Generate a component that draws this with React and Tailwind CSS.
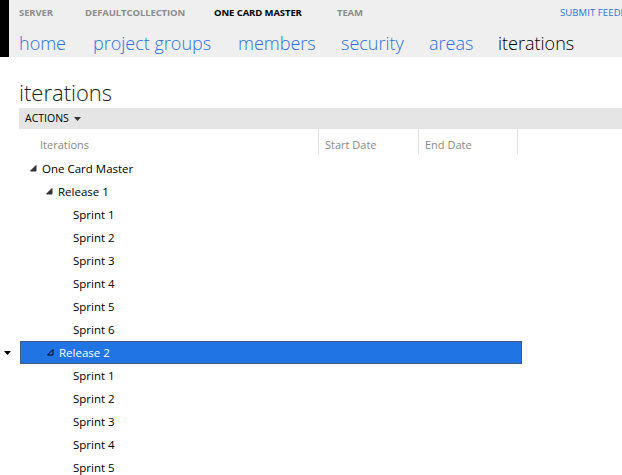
import React from 'react';

const crumbs = [
  { label: 'SERVER', w: 'w-[66px]', active: false },
  { label: 'DEFAULTCOLLECTION', w: 'w-[129px]', active: false },
  { label: 'ONE CARD MASTER', w: 'w-[123px]', active: true },
  { label: 'TEAM', w: 'w-[223px]', active: false },
];

const tabs = [
  { label: 'home', w: 'w-[74px]' },
  { label: 'project groups', w: 'w-[145px]' },
  { label: 'members', w: 'w-[103px]' },
  { label: 'security', w: 'w-[88px]' },
  { label: 'areas', w: 'w-[69px]' },
  { label: 'iterations', w: 'w-[90px]', active: true },
];

const rows = [
  { label: 'One Card Master', level: 0, node: true },
  { label: 'Release 1', level: 1, node: true },
  { label: 'Sprint 1', level: 2 },
  { label: 'Sprint 2', level: 2 },
  { label: 'Sprint 3', level: 2 },
  { label: 'Sprint 4', level: 2 },
  { label: 'Sprint 5', level: 2 },
  { label: 'Sprint 6', level: 2 },
  { label: 'Release 2', level: 1, node: true, selected: true },
  { label: 'Sprint 1', level: 2 },
  { label: 'Sprint 2', level: 2 },
  { label: 'Sprint 3', level: 2 },
  { label: 'Sprint 4', level: 2 },
  { label: 'Sprint 5', level: 2 },
];

const indent = ['pl-[10px]', 'pl-[26px]', 'pl-[53px]'];

const Expander = ({ hollow }) => (
  <svg width="7" height="7" viewBox="0 0 7 7" className="mr-[5px] shrink-0">
    <polygon
      points="6,0.5 6,6 0.5,6"
      fill={hollow ? '#2074e4' : '#333'}
      stroke={hollow ? '#000' : '#333'}
      strokeWidth="1"
    />
  </svg>
);

export default function App() {
  return (
    <div className="w-[622px] h-[475px] overflow-hidden bg-white font-['Open_Sans','Noto_Sans',sans-serif]">
      {/* top header */}
      <div className="flex h-[57px] bg-[#efefef]">
        <div className="w-[9px] bg-black shrink-0" />
        <div className="flex-1 pl-[10px] min-w-0">
          <div className="flex items-center h-[25px] pt-[1px] whitespace-nowrap">
            {crumbs.map((c) => (
              <div
                key={c.label}
                className={`${c.w} shrink-0 text-[9.5px] font-bold tracking-[-0.1px] ${c.active ? 'text-black' : 'text-[#8c8c8c]'}`}
              >
                {c.label}
              </div>
            ))}
            <div className="text-[9.5px] text-[#2a72e0] tracking-[0.1px]">SUBMIT FEEDBACK</div>
          </div>
          <div className="flex items-center h-[32px] pt-[3px] whitespace-nowrap">
            {tabs.map((t) => (
              <div
                key={t.label}
                className={`${t.w} shrink-0 text-[18px] font-light leading-none ${t.active ? 'text-black' : 'text-[#2a72e0]'}`}
              >
                {t.label}
              </div>
            ))}
          </div>
        </div>
      </div>

      {/* page title */}
      <div className="pl-[19px] pt-[24px] h-[51px] text-[22px] font-light leading-none text-[#222]">iterations</div>

      {/* actions bar */}
      <div className="ml-[19px] h-[21px] bg-[#e5e5e5] flex items-center pl-[6px] text-[10.5px] text-black">
        ACTIONS
        <svg width="7" height="4" viewBox="0 0 7 4" className="ml-[5px]">
          <polygon points="0,0 7,0 3.5,4" fill="#333" />
        </svg>
      </div>

      {/* grid header */}
      <div className="flex ml-[19px] h-[28px] text-[11px] text-[#8a8a8a]">
        <div className="w-[299px] pl-[21px] pt-[8px]">Iterations</div>
        <div className="w-[100px] border-l border-[#e3e3e3] pl-[6px] pt-[8px] mb-[3px]">Start Date</div>
        <div className="w-[100px] border-l border-r border-[#e3e3e3] pl-[6px] pt-[8px] mb-[3px]">End Date</div>
      </div>

      {/* rows */}
      <div className="flex flex-col">
        {rows.map((r, i) => (
          <div key={i} className="flex items-center h-[23px]">
            <div className="w-[20px] shrink-0 flex justify-center pr-[6px]">
              {r.selected && (
                <svg width="7" height="4" viewBox="0 0 7 4">
                  <polygon points="0,0 7,0 3.5,4" fill="#000" />
                </svg>
              )}
            </div>
            <div
              className={`w-[502px] h-[23px] flex items-center text-[11.5px] ${indent[r.level]} ${
                r.selected ? 'bg-[#2074e4] border border-[#47597a] text-white' : 'text-black'
              }`}
            >
              {r.node && <Expander hollow={r.selected} />}
              {r.label}
            </div>
          </div>
        ))}
      </div>
    </div>
  );
}
